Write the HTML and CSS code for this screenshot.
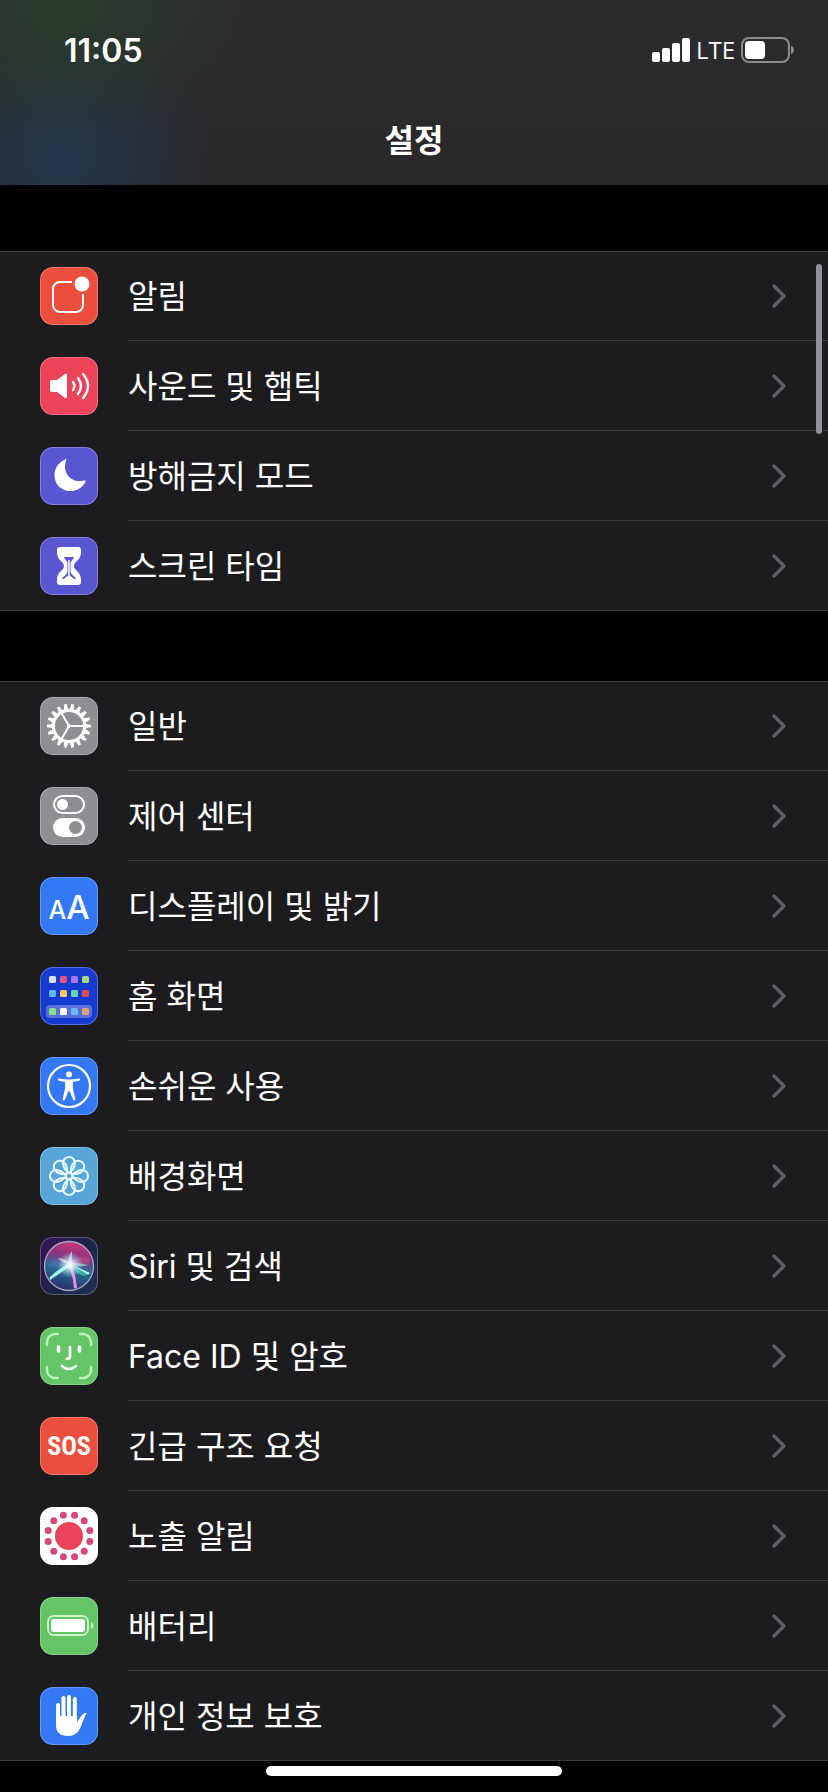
FILE: index.html
```
<!DOCTYPE html>
<html lang="ko">
<head>
  <meta charset="UTF-8">
  <meta name="viewport" content="width=device-width, initial-scale=1.0">
  <title>설정</title>
  <link rel="stylesheet" href="styles.css">
</head>
<body>
  <svg class="defs" width="0" height="0" aria-hidden="true">
    <symbol id="chevron" viewBox="0 0 16 26">
      <path d="M3 3l10 10L3 23" fill="none" stroke="#5f5f63" stroke-width="3.4" stroke-linecap="round" stroke-linejoin="round"/>
    </symbol>
  </svg>

  <header class="header">
    <div class="status-bar">
      <time class="clock">11:05</time>
      <div class="status-icons">
        <svg width="38" height="24" viewBox="0 0 38 24" fill="#fff">
          <rect x="0" y="14" width="8" height="10" rx="2"/>
          <rect x="10" y="10" width="8" height="14" rx="2"/>
          <rect x="20" y="5" width="8" height="19" rx="2"/>
          <rect x="30" y="0" width="8" height="24" rx="2"/>
        </svg>
        <span class="network">LTE</span>
        <svg width="54" height="26" viewBox="0 0 54 26">
          <rect x="1" y="1" width="47" height="24" rx="7" fill="none" stroke="#8b8b8d" stroke-width="2"/>
          <rect x="4" y="4" width="20" height="18" rx="4" fill="#fff"/>
          <path d="M50 9c4 1 4 7 0 8z" fill="#8b8b8d"/>
        </svg>
      </div>
    </div>
    <h1 class="title">설정</h1>
  </header>

  <main class="settings">
    <nav class="group">
      <a class="row" href="#notifications">
        <span class="icon red">
          <svg viewBox="0 0 58 58" fill="none" stroke="#fff" stroke-width="2">
            <path d="M32 15H20a7 7 0 0 0-7 7v16a7 7 0 0 0 7 7h16a7 7 0 0 0 7-7V27"/>
            <circle cx="42" cy="17" r="7.5" fill="#fff" stroke="none"/>
          </svg>
        </span>
        <span class="label"><span class="name">알림</span><svg class="chevron"><use href="#chevron"/></svg></span>
      </a>
      <a class="row" href="#sounds">
        <span class="icon pink">
          <svg viewBox="0 0 58 58" fill="none" stroke="#fff" stroke-width="2.4" stroke-linecap="round">
            <path d="M10 25q0-2 2-2h5l8-6q2-1 2 1v22q0 2-2 1l-8-6h-5q-2 0-2-2z" fill="#fff" stroke="none"/>
            <path d="M33 25q3 4 0 8M38 21q6 8 0 16M43 17q10 12 0 24"/>
          </svg>
        </span>
        <span class="label"><span class="name">사운드 및 햅틱</span><svg class="chevron"><use href="#chevron"/></svg></span>
      </a>
      <a class="row" href="#do-not-disturb">
        <span class="icon indigo">
          <svg viewBox="0 0 58 58" fill="#fff">
            <path d="M25 12.500c1-.5 1.600 0 1.200 1C21.500 25 31 37 44 33.500c1.500-.4 2 .3 1.400 1.400C42 41 37 44 30 44 21 44 14.500 37 14.500 28.500 14.500 21 18.500 15.500 25 12.500z"/>
          </svg>
        </span>
        <span class="label"><span class="name">방해금지 모드</span><svg class="chevron"><use href="#chevron"/></svg></span>
      </a>
      <a class="row" href="#screen-time">
        <span class="icon indigo">
          <svg viewBox="0 0 58 58">
            <path d="M20 10h18q3 0 3 3v2c0 6-3 8-6 11q-2 3 0 6c3 3 6 5 6 11v2q0 3-3 3H20q-3 0-3-3v-2c0-6 3-8 6-11q2-3 0-6c-3-3-6-5-6-11v-2q0-3 3-3z" fill="#fff"/>
            <path d="M24 20h10c-1 3-3.500 4-3.500 7v7c0 4 4.500 5 5.500 8H22c1-3 5.500-4 5.500-8v-7c0-3-2.500-4-3.500-7z" fill="#5856d0"/>
            <path d="M29 23v16M25 42q4-5 8 0z" stroke="#fff" stroke-width="1.500" fill="#fff"/>
          </svg>
        </span>
        <span class="label"><span class="name">스크린 타임</span><svg class="chevron"><use href="#chevron"/></svg></span>
      </a>
    </nav>

    <nav class="group">
      <a class="row" href="#general">
        <span class="icon gray">
          <svg viewBox="0 0 58 58" fill="none" stroke="#fff">
            <circle cx="29" cy="29" r="15.700" stroke-width="3.200"/>
            <circle cx="29" cy="29" r="18" stroke-width="3" pathLength="180" stroke-dasharray="6 4" stroke-dashoffset="3"/>
            <circle cx="29" cy="29" r="20.500" stroke-width="3" pathLength="180" stroke-dasharray="4 6" stroke-dashoffset="2"/>
            <path d="M29 29h15M29 29l-7.500-13M29 29l-7.500 13" stroke-width="2"/>
            <circle cx="29" cy="29" r="1.500" fill="#fff"/>
          </svg>
        </span>
        <span class="label"><span class="name">일반</span><svg class="chevron"><use href="#chevron"/></svg></span>
      </a>
      <a class="row" href="#control-center">
        <span class="icon gray">
          <svg viewBox="0 0 58 58">
            <rect x="14" y="9" width="30" height="17" rx="8.500" fill="none" stroke="#fff" stroke-width="2"/>
            <circle cx="22.500" cy="17.500" r="5.500" fill="#fff"/>
            <rect x="13" y="31" width="32" height="19" rx="9.500" fill="#fff"/>
            <circle cx="35.500" cy="40.500" r="6.500" fill="#8e8e93"/>
          </svg>
        </span>
        <span class="label"><span class="name">제어 센터</span><svg class="chevron"><use href="#chevron"/></svg></span>
      </a>
      <a class="row" href="#display">
        <span class="icon blue text-size"><span class="small-a">A</span><span class="big-a">A</span></span>
        <span class="label"><span class="name">디스플레이 및 밝기</span><svg class="chevron"><use href="#chevron"/></svg></span>
      </a>
      <a class="row" href="#home-screen">
        <span class="icon navy">
          <svg viewBox="0 0 58 58">
            <rect x="6" y="38" width="46" height="13" rx="4" fill="#5a70d8"/>
            <rect x="9" y="9" width="7" height="7" rx="1.500" fill="#d9dff5"/>
            <rect x="20" y="9" width="7" height="7" rx="1.500" fill="#e2567c"/>
            <rect x="31" y="9" width="7" height="7" rx="1.500" fill="#a678f5"/>
            <rect x="42" y="9" width="7" height="7" rx="1.500" fill="#a9d67c"/>
            <rect x="9" y="23" width="7" height="7" rx="1.500" fill="#5cb6f7"/>
            <rect x="20" y="23" width="7" height="7" rx="1.500" fill="#f7c667"/>
            <rect x="31" y="23" width="7" height="7" rx="1.500" fill="#63d6b0"/>
            <rect x="42" y="23" width="7" height="7" rx="1.500" fill="#dc4c58"/>
            <rect x="9" y="41" width="7" height="7" rx="1.500" fill="#86e08c"/>
            <rect x="20" y="41" width="7" height="7" rx="1.500" fill="#fff"/>
            <rect x="31" y="41" width="7" height="7" rx="1.500" fill="#68baf8"/>
            <rect x="42" y="41" width="7" height="7" rx="1.500" fill="#dfa070"/>
          </svg>
        </span>
        <span class="label"><span class="name">홈 화면</span><svg class="chevron"><use href="#chevron"/></svg></span>
      </a>
      <a class="row" href="#accessibility">
        <span class="icon blue">
          <svg viewBox="0 0 58 58">
            <circle cx="29" cy="29" r="21" fill="none" stroke="#fff" stroke-width="2.200"/>
            <circle cx="29" cy="17.500" r="3" fill="#fff"/>
            <path d="M19 21.500q10 2 20 0 1.500 0 1.200 1-.2 1-1.200 1.200l-6 1.300q-.6 5 .5 9l1.800 8q.2 1.500-1 1.500-1 0-1.500-1.500L29.500 34h-1l-3.300 8q-.5 1.500-1.500 1.500-1.200 0-1-1.500l1.800-8q1.100-4 .5-9l-6-1.300q-1-.2-1.200-1.200-.3-1 1.200-1z" fill="#fff"/>
          </svg>
        </span>
        <span class="label"><span class="name">손쉬운 사용</span><svg class="chevron"><use href="#chevron"/></svg></span>
      </a>
      <a class="row" href="#wallpaper">
        <span class="icon cyan">
          <svg viewBox="0 0 58 58" fill="none" stroke="#e6f8ff" stroke-width="2">
            <g id="petals">
              <path id="petal" d="M29 26C25 23 23 19 23 16a6 6 0 0 1 12 0c0 3-2 7-6 10z"/>
              <use href="#petal" transform="rotate(90 29 29)"/>
              <use href="#petal" transform="rotate(180 29 29)"/>
              <use href="#petal" transform="rotate(270 29 29)"/>
            </g>
            <use href="#petals" transform="rotate(45 29 29)"/>
            <circle cx="29" cy="29" r="3.500" stroke-width="1.500"/>
          </svg>
        </span>
        <span class="label"><span class="name">배경화면</span><svg class="chevron"><use href="#chevron"/></svg></span>
      </a>
      <a class="row" href="#siri">
        <span class="icon siri">
          <svg viewBox="0 0 58 58">
            <defs>
              <linearGradient id="orb" x1="0.600" y1="0" x2="0.400" y2="1">
                <stop offset="0" stop-color="#c93a78"/>
                <stop offset="0.300" stop-color="#8a3480"/>
                <stop offset="0.550" stop-color="#2a6d92"/>
                <stop offset="1" stop-color="#26306e"/>
              </linearGradient>
              <radialGradient id="glow">
                <stop offset="0" stop-color="#fff"/>
                <stop offset="0.300" stop-color="#e4f8ff" stop-opacity="0.800"/>
                <stop offset="1" stop-color="#8fe0ff" stop-opacity="0"/>
              </radialGradient>
            </defs>
            <circle cx="29" cy="29" r="24.500" fill="url(#orb)" stroke="#a9a2c4" stroke-width="1.300"/>
            <path d="M29 27Q16 17 8 28q8 5 21-1z" fill="#4f78b8" opacity="0.500"/>
            <path d="M30 27q10-12 20-5 2 7-20 5z" fill="#d04d86" opacity="0.500"/>
            <path d="M30 28l19 9q-8 6-19-9z" fill="#38bfa8" opacity="0.800"/>
            <path d="M30 27l20 9-2 1.500z" fill="#b8fbe6"/>
            <path d="M28 28q5 10 6 23 3 1 3-1-1-12-6-23z" fill="#ea8edc"/>
            <path d="M32 28L10 43q-1-2 0-3 8-8 20-14z" fill="#a4f4fa"/>
            <path d="M28 29q0-10 4-15 0 7 0 14zM18 21q9 1 13 7-9-2-13-7z" fill="#e9b2d9" opacity="0.900"/>
            <path d="M29 27q10-2 19 1-9 3-19-1z" fill="#aef5ef" opacity="0.600"/>
            <circle cx="30" cy="28" r="13" fill="url(#glow)"/>
          </svg>
        </span>
        <span class="label"><span class="name">Siri 및 검색</span><svg class="chevron"><use href="#chevron"/></svg></span>
      </a>
      <a class="row" href="#face-id">
        <span class="icon green">
          <svg viewBox="0 0 58 58" fill="none" stroke="#fff" stroke-linecap="round">
            <path d="M7 18v-3a8 8 0 0 1 8-8h3M40 7h3a8 8 0 0 1 8 8v3M51 40v3a8 8 0 0 1-8 8h-3M18 51h-3a8 8 0 0 1-8-8v-3" stroke="#bdf0bd" stroke-width="2.400"/>
            <path d="M18.500 20v4M39.500 20v4" stroke-width="3.600"/>
            <path d="M30 20v9q0 3-3.500 3M22 39q7 6 14 0" stroke-width="2.600"/>
          </svg>
        </span>
        <span class="label"><span class="name">Face ID 및 암호</span><svg class="chevron"><use href="#chevron"/></svg></span>
      </a>
      <a class="row" href="#sos">
        <span class="icon red sos">SOS</span>
        <span class="label"><span class="name">긴급 구조 요청</span><svg class="chevron"><use href="#chevron"/></svg></span>
      </a>
      <a class="row" href="#exposure">
        <span class="icon white">
          <svg viewBox="0 0 58 58" fill="#eb445a">
            <circle cx="29" cy="29" r="14"/>
            <g fill="#d44a75">
              <circle cx="23.400" cy="8.200" r="3.500"/>
              <circle cx="34.600" cy="8.200" r="3.500"/>
              <circle cx="44.200" cy="13.800" r="3.500"/>
              <circle cx="49.800" cy="23.400" r="3.500"/>
              <circle cx="49.800" cy="34.600" r="3.500"/>
              <circle cx="44.200" cy="44.200" r="3.500"/>
              <circle cx="34.600" cy="49.800" r="3.500"/>
              <circle cx="23.400" cy="49.800" r="3.500"/>
              <circle cx="13.800" cy="44.200" r="3.500"/>
              <circle cx="8.200" cy="34.600" r="3.500"/>
              <circle cx="8.200" cy="23.400" r="3.500"/>
              <circle cx="13.800" cy="13.800" r="3.500"/>
            </g>
          </svg>
        </span>
        <span class="label"><span class="name">노출 알림</span><svg class="chevron"><use href="#chevron"/></svg></span>
      </a>
      <a class="row" href="#battery">
        <span class="icon green">
          <svg viewBox="0 0 58 58">
            <rect x="8" y="19" width="40" height="19" rx="5.500" fill="none" stroke="#c9f5c9" stroke-width="1.800"/>
            <rect x="11" y="22" width="34" height="13" rx="3" fill="#fff"/>
            <path d="M51 25c3 1 3 6 0 7z" fill="#c9f5c9"/>
          </svg>
        </span>
        <span class="label"><span class="name">배터리</span><svg class="chevron"><use href="#chevron"/></svg></span>
      </a>
      <a class="row" href="#privacy">
        <span class="icon blue">
          <svg viewBox="0 0 58 58" fill="none" stroke="#fff" stroke-width="4" stroke-linecap="round">
            <path d="M18 18v16M23.500 11v20M29 10v20M34.800 12v20"/>
            <path d="M16 29h21v6l5-7q2-2.500 4.500-2-.5 1-2 4.500l-4 10Q37 49 28 49 16 49 16 38z" fill="#fff" stroke="none"/>
          </svg>
        </span>
        <span class="label"><span class="name">개인 정보 보호</span><svg class="chevron"><use href="#chevron"/></svg></span>
      </a>
    </nav>
    <div class="scroll-thumb"></div>
  </main>

  <div class="home-indicator"></div>
</body>
</html>
```
FILE: styles.css
```
* {
  box-sizing: border-box;
}
body {
  margin: 0;
  min-height: 100vh;
  background-color: #000;
  color: #fff;
  font-family: Inter, "Noto Sans CJK KR", sans-serif;
}
.defs {
  position: absolute;
}

/* header */
.header {
  height: 185px;
  padding-top: 24px;
  background:
    radial-gradient(ellipse 180px 140px at 60px 10px, #2a3b2c, transparent),
    radial-gradient(ellipse 150px 130px at 60px 160px, #24354c, transparent),
    linear-gradient(#2c2c2f, #29292a);
}
.status-bar {
  display: flex;
  align-items: center;
  justify-content: space-between;
  height: 52px;
  padding: 0 33px 0 64px;
}
.clock {
  font-size: 32px;
  font-weight: 600;
}
.status-icons {
  display: flex;
  align-items: center;
  gap: 6px;
}
.network {
  font-family: "Open Sans", sans-serif;
  font-size: 24px;
  font-weight: 500;
  line-height: 26px;
}
.title {
  margin: 38px 0 0;
  font-size: 32px;
  font-weight: 700;
  line-height: 54px;
  text-align: center;
}

/* list */
.settings {
  position: relative;
  display: flex;
  flex-direction: column;
  gap: 70px;
  padding: 66px 0 31px;
}
.group {
  background-color: #1c1c1e;
  box-shadow: inset 0 1px #3d3d3f, inset 0 -1px #3d3d3f;
}
.row {
  display: flex;
  align-items: center;
  gap: 30px;
  height: 90px;
  padding-left: 40px;
  color: #fff;
  text-decoration: none;
}
.label {
  flex: 1;
  display: flex;
  align-items: center;
  justify-content: space-between;
  height: 100%;
  padding-right: 41px;
  border-bottom: 1px solid #38383a;
}
.name {
  padding-bottom: 4px;
  font-size: 32px;
}
.row:last-child .label {
  border-bottom-color: transparent;
}
.chevron {
  width: 16px;
  height: 26px;
}

/* icons */
.icon {
  display: flex;
  align-items: center;
  justify-content: center;
  width: 58px;
  height: 58px;
  border-radius: 13px;
  box-shadow: inset 0 0 0 1px rgba(255, 255, 255, 0.25);
}
.icon svg {
  width: 58px;
  height: 58px;
}
.red {
  background-color: #eb4e3d;
}
.pink {
  background-color: #eb445a;
}
.indigo {
  background-color: #5856d0;
}
.gray {
  background-color: #8e8e93;
}
.blue {
  background-color: #3478f6;
}
.navy {
  background-color: #173bd0;
}
.cyan {
  background-color: #58a6d8;
}
.siri {
  background: linear-gradient(120deg, #3a1358, #1b2444 50%, #1c3358);
}
.green {
  background-color: #65c466;
}
.white {
  background-color: #fff;
}
.text-size {
  align-items: baseline;
  font-weight: 500;
  line-height: 60px;
}
.small-a {
  font-size: 25px;
}
.big-a {
  font-size: 33px;
}
.sos {
  font-family: "Roboto Condensed", "Liberation Sans Narrow", sans-serif;
  font-size: 26px;
  font-weight: 700;
}

/* overlays */
.scroll-thumb {
  position: absolute;
  top: 79px;
  right: 6px;
  width: 6px;
  height: 170px;
  border-radius: 3px;
  background-color: #919195;
}
.home-indicator {
  position: fixed;
  bottom: 16px;
  left: 50%;
  width: 296px;
  height: 10px;
  border-radius: 5px;
  background-color: #fff;
  transform: translateX(-50%);
}
```
